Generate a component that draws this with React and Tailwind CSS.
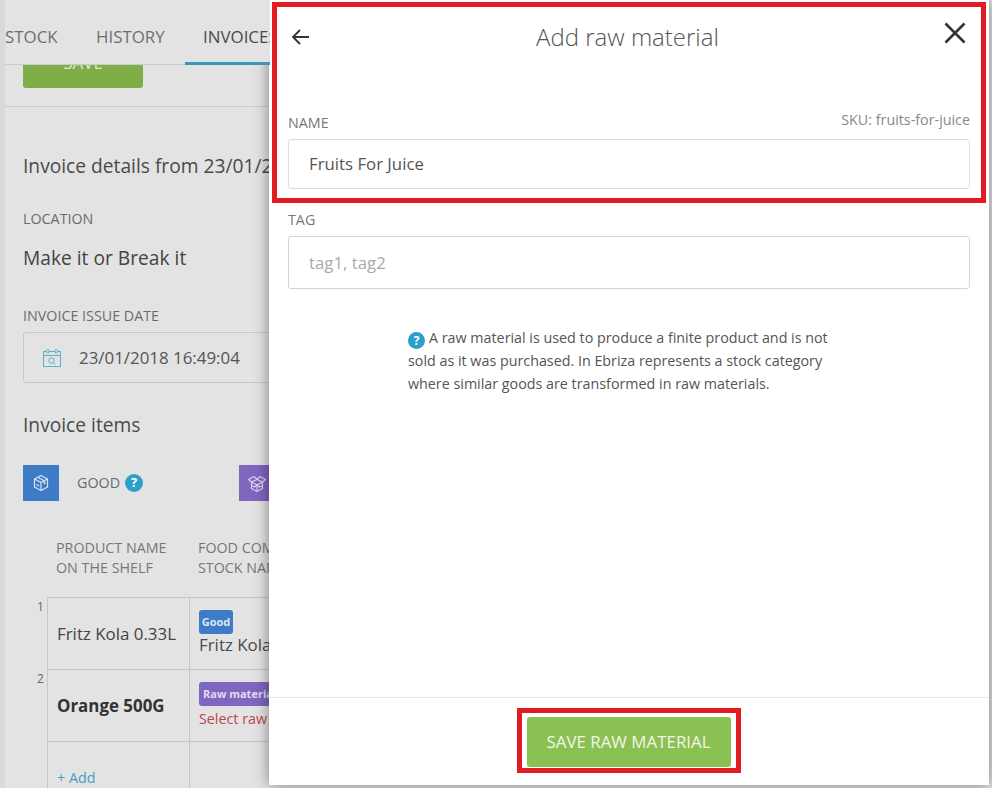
import React from 'react';

const font = "font-['Open_Sans','Noto_Sans',sans-serif]";

const HelpDot = ({ className }) => (
  <span className={`inline-flex items-center justify-center rounded-full bg-[#2e9fcb] text-white font-bold ${className}`}>?</span>
);

const CalendarSearch = () => (
  <svg width="18" height="18" viewBox="0 0 18 18" fill="none" stroke="#5aaecb" strokeWidth="1">
    <rect x="0.5" y="2.5" width="17" height="15" />
    <path d="M0.5 6.5h17" />
    <rect x="3.5" y="0.5" width="2.5" height="3.5" rx="1" fill="#e3e3e3" />
    <rect x="12" y="0.5" width="2.5" height="3.5" rx="1" fill="#e3e3e3" />
    <circle cx="8.5" cy="11.5" r="2.7" />
    <path d="M10.5 13.5l2 2" />
  </svg>
);

const ClosedBox = () => (
  <svg width="18" height="18" viewBox="0 0 18 18" fill="none" stroke="#d8e4f5" strokeWidth="1.2" strokeLinejoin="round">
    <path d="M9 1.5l6.5 3.5v8L9 16.5 2.5 13V5z" />
    <path d="M2.5 5L9 8.500 15.500 5M9 8.500v8" />
    <path d="M5.700 3.300l6.500 3.500v3M4.500 10.500l2.500 1.400M12.200 9.800l1.500-.8" />
  </svg>
);

const OpenBox = () => (
  <svg width="20" height="20" viewBox="0 0 20 20" fill="none" stroke="#ddd3f0" strokeWidth="1.1" strokeLinejoin="round">
    <path d="M10 6.500l5.500 2.500v6.500L10 18.500l-5.500-3V9z" />
    <path d="M4.500 9L10 12l5.500-3M10 12v6.500" />
    <path d="M4.500 9L1.500 6.500 7 3.500l3 3 3-3 5.500 3-3 2.500" />
    <path d="M10 12l-2.500 2-3-1.500M10 12l2.500 2 3-1.500" />
  </svg>
);

const TableRow = ({ index, children, second }) => (
  <div className="relative flex">
    {index && <span className="absolute left-[-11px] top-[1px] text-xs leading-4 text-[#666]">{index}</span>}
    <div className="flex h-[72px] w-[142px] shrink-0 items-center border-r border-b border-[#c4c6ca] pl-[9px]">{children}</div>
    <div className="h-[72px] w-[200px] shrink-0 border-b border-[#c4c6ca] pl-[9px]">{second}</div>
  </div>
);

const InvoicePage = () => (
  <div className="h-[788px] w-[270px] overflow-hidden border-l-[5px] border-[#d9dade] bg-[#e3e3e3] text-[#444]">
    <div className="relative z-10 -ml-[5px] flex h-[65px] w-[400px] items-center border-b border-[#c9cacb] bg-[#e3e3e3] pt-[9px] text-[16.9px] text-[#6f6f6f]">
      <span className="ml-[5px] w-[91px]">STOCK</span>
      <span className="w-[89px]">HISTORY</span>
      <span className="relative flex h-full w-[110px] items-center pl-[18px] text-[#4a4a4a]">
        INVOICES
        <span className="absolute bottom-[-1px] left-0 h-[3px] w-full bg-[#3d97b8]" />
      </span>
    </div>
    <div className="flow-root h-[42px] border-b border-[#cbcbcb]">
      <div className="ml-[18px] -mt-[27px] flex h-[50px] w-[120px] items-center justify-center rounded-[3px] bg-[#7fad48] text-[17px] text-[#dfe9d0]">SAVE</div>
    </div>
    <div className="w-[500px] pl-[18px]">
      <p className="mt-[45px] text-[19.2px] leading-[28px] text-[#4a4a4a]">Invoice details from 23/01/2018</p>
      <p className="mt-[29px] text-[14.3px] leading-5 text-[#6b6b6b]">LOCATION</p>
      <p className="mt-[15px] text-[19.2px] leading-[28px] text-[#444]">Make it or Break it</p>
      <p className="mt-[34px] text-[14.3px] leading-5 text-[#6b6b6b]">INVOICE ISSUE DATE</p>
      <div className="mt-[6px] flex h-[51px] w-[400px] items-center rounded-[3px] border border-[#c6c7c8] pl-[19px]">
        <CalendarSearch />
        <span className="ml-[18px] text-[16.9px] text-[#555]">23/01/2018 16:49:04</span>
      </div>
      <p className="mt-[28px] text-[19.2px] leading-[28px] text-[#4a4a4a]">Invoice items</p>
      <div className="mt-[26px] flex items-center">
        <span className="flex h-[36px] w-[36px] shrink-0 items-center justify-center bg-[#3f7cc7]"><ClosedBox /></span>
        <span className="ml-[18px] w-[43px] text-[14.3px] text-[#6b6b6b]">GOOD</span>
        <HelpDot className="ml-[5px] h-[18px] w-[18px] text-[13px]" />
        <span className="ml-[96px] flex h-[36px] w-[36px] shrink-0 items-center justify-center bg-[#7f66bf]"><OpenBox /></span>
      </div>
      <div className="mt-[37px] flex pl-[33px] text-[14.3px] leading-5 text-[#777]">
        <span className="w-[142px]">PRODUCT NAME<br />ON THE SHELF</span>
        <span>FOOD COMPONENT<br />STOCK NAME</span>
      </div>
      <div className="ml-[24px] mt-[19px] border-l border-t border-[#c4c6ca]">
        <TableRow
          index="1"
          second={
            <div className="pt-[12px]">
              <span className="block h-[24px] w-[34px] rounded-[3px] bg-[#3f7cc7] text-center text-[11px] font-bold leading-[24px] text-[#dbe7f7]">Good</span>
              <span className="block text-[16.9px] leading-[22px] text-[#4a4a4a]">Fritz Kola</span>
            </div>
          }
        >
          <span className="text-[16.9px] text-[#444]">Fritz Kola 0.33L</span>
        </TableRow>
        <TableRow
          index="2"
          second={
            <div className="pt-[12px]">
              <span className="block h-[24px] w-[96px] rounded-[3px] bg-[#7f66bf] pl-[4px] text-[11px] font-bold leading-[24px] text-[#e2dcf3]">Raw material</span>
              <span className="mt-[1px] block text-[14.3px] leading-[24px] text-[#b8474e]">Select raw material</span>
            </div>
          }
        >
          <span className="text-[16.9px] font-bold text-[#333]">Orange 500G</span>
        </TableRow>
        <TableRow>
          <span className="text-[14.3px] text-[#4b9dc0]">+ Add</span>
        </TableRow>
      </div>
    </div>
  </div>
);

const AddRawMaterial = () => (
  <div className="absolute left-[269px] top-0 flex h-[785px] w-[720px] flex-col bg-white shadow-[0_0_14px_rgba(0,0,0,0.45)]">
    <div className="flex h-[74px] shrink-0 items-center px-[20px]">
      <svg width="24" height="24" viewBox="0 0 24 24" fill="none" stroke="#333" strokeWidth="1.8"><path d="M20 12H4M11 5l-7 7 7 7" /></svg>
      <h1 className="flex-1 text-center text-2xl font-light leading-8 text-[#555]">Add raw material</h1>
      <svg className="-mt-[9px] mr-[1px]" width="26" height="26" viewBox="0 0 26 26" fill="none" stroke="#333" strokeWidth="2.6"><path d="M3.500 3.500l19 19M22.500 3.500l-19 19" /></svg>
    </div>
    <div className="ml-[19px] mr-[19px]">
      <div className="mt-[36px] flex items-start justify-between">
        <label className="mt-[3px] text-[14.3px] leading-5 text-[#777]">NAME</label>
        <span className="text-[14.3px] leading-5 text-[#888]">SKU: fruits-for-juice</span>
      </div>
      <div className="mt-[6px] flex h-[50px] items-center rounded-[3px] border border-[#dcdcdc] pl-[20px] text-[16.8px] text-[#555]">Fruits For Juice</div>
      <label className="mt-[21px] block text-[14.3px] leading-5 text-[#777]">TAG</label>
      <div className="mt-[6px] flex h-[53px] items-center rounded-[3px] border border-[#d4d4d4] pl-[20px] text-[16.8px] text-[#aaa]">tag1, tag2</div>
    </div>
    <p className="ml-[139px] mt-[37px] w-[440px] text-[14.3px] leading-[23px] text-[#555]">
      <HelpDot className="mr-[4px] h-[17px] w-[17px] align-[-2px] text-[12px]" />
      A raw material is used to produce a finite product and is not sold as it was purchased. In Ebriza represents a stock category where similar goods are transformed in raw materials.
    </p>
    <div className="mt-auto flex h-[88px] shrink-0 items-start justify-center border-t border-[#e8e8e8] pt-[19px]">
      <button className="ml-[-1px] h-[50px] w-[204px] rounded-[3px] bg-[#8bc053] text-[16.9px] text-[#f1f7e8]">SAVE RAW MATERIAL</button>
    </div>
  </div>
);

export default function App() {
  return (
    <div className={`relative h-[788px] w-[992px] overflow-hidden bg-[#e3e3e3] ${font}`}>
      <InvoicePage />
      <AddRawMaterial />
      <div className="absolute left-[272px] top-[2px] h-[201px] w-[714px] border-[5px] border-[#e31b23]" />
      <div className="absolute left-[517px] top-[708px] h-[65px] w-[224px] border-[5px] border-[#e31b23]" />
    </div>
  );
}
